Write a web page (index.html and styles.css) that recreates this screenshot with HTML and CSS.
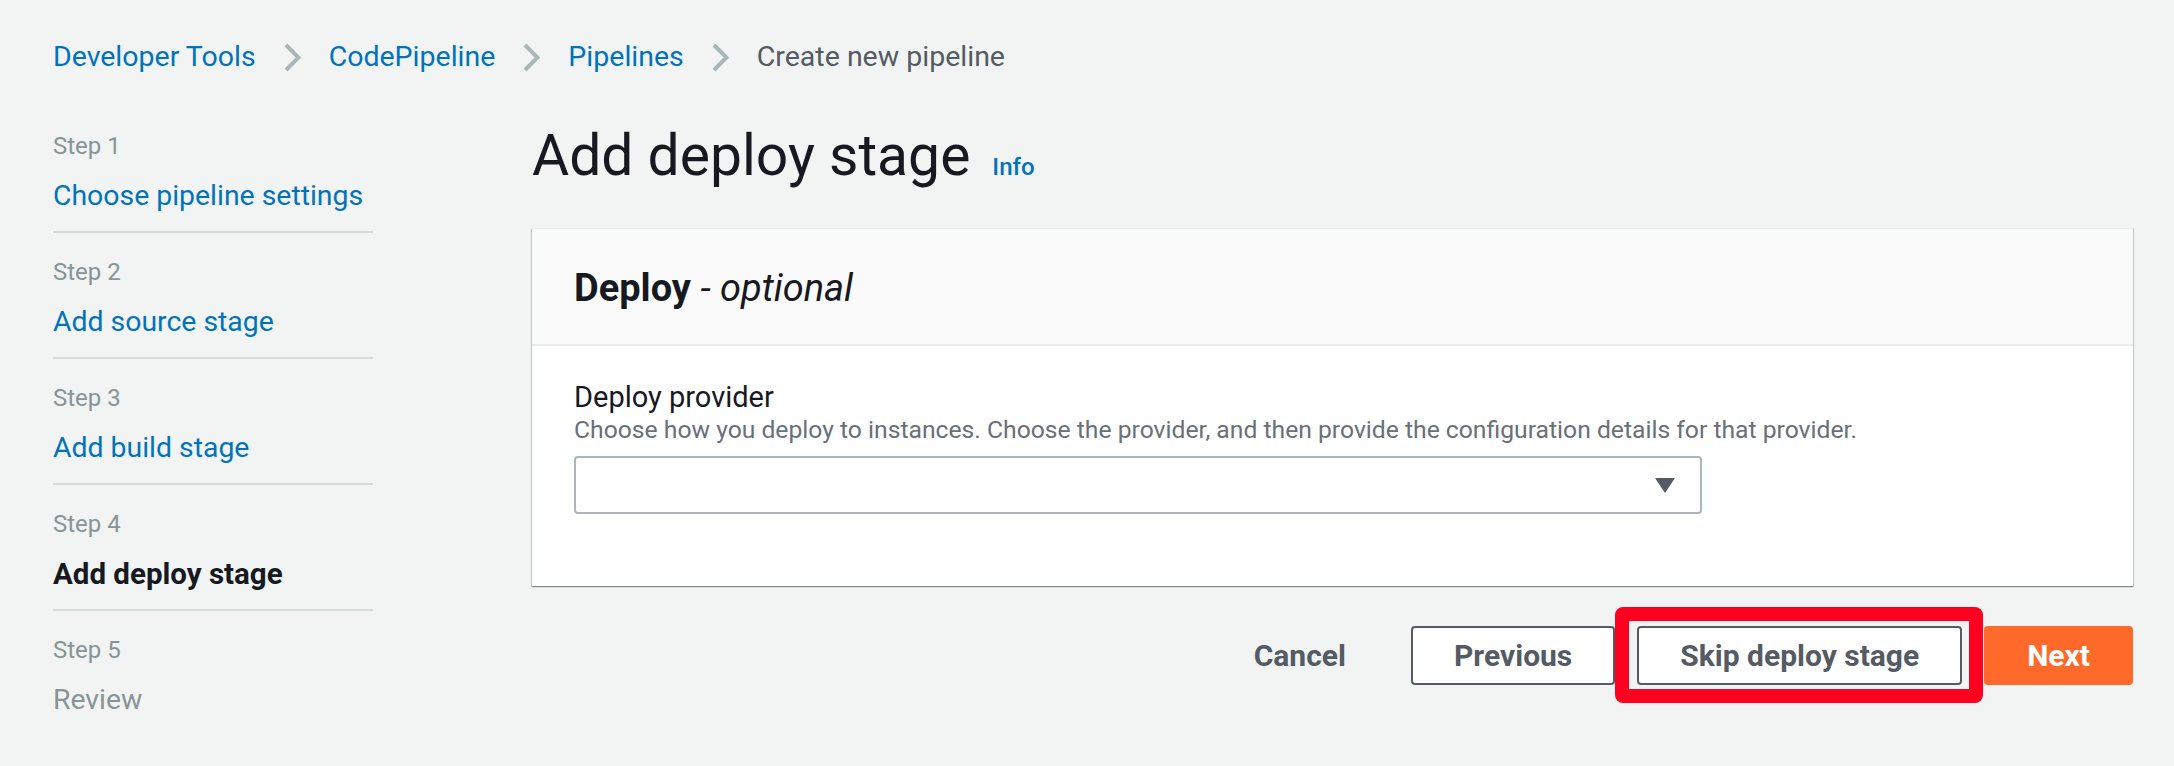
FILE: index.html
```html
<!DOCTYPE html>
<html lang="en">

<head>
  <meta charset="UTF-8">
  <meta name="viewport" content="width=device-width, initial-scale=1.0">
  <title>Create new pipeline</title>
  <link rel="stylesheet" href="styles.css">
</head>

<body>

  <div class="page">
    <nav class="breadcrumbs">
      <a href="#">Developer Tools</a>
      <svg class="crumb-sep" width="17" height="29" viewBox="0 0 17 29"><path d="M2 2 L14.5 14.5 L2 27" /></svg>
      <a href="#">CodePipeline</a>
      <svg class="crumb-sep" width="17" height="29" viewBox="0 0 17 29"><path d="M2 2 L14.5 14.5 L2 27" /></svg>
      <a href="#">Pipelines</a>
      <svg class="crumb-sep" width="17" height="29" viewBox="0 0 17 29"><path d="M2 2 L14.5 14.5 L2 27" /></svg>
      <span class="current">Create new pipeline</span>
    </nav>

    <div class="wizard">
      <!-- шаги мастера -->
      <ul class="steps">
        <li class="step">
          <div class="step-num">Step 1</div>
          <a class="step-title" href="#">Choose pipeline settings</a>
        </li>
        <li class="step">
          <div class="step-num">Step 2</div>
          <a class="step-title" href="#">Add source stage</a>
        </li>
        <li class="step">
          <div class="step-num">Step 3</div>
          <a class="step-title" href="#">Add build stage</a>
        </li>
        <li class="step">
          <div class="step-num">Step 4</div>
          <span class="step-title active">Add deploy stage</span>
        </li>
        <li class="step">
          <div class="step-num">Step 5</div>
          <span class="step-title disabled">Review</span>
        </li>
      </ul>

      <main class="content">
        <div class="page-title">
          <h1>Add deploy stage</h1>
          <a class="info" href="#">Info</a>
        </div>

        <section class="card">
          <div class="card-header">
            <h2>Deploy <span class="optional">- optional</span></h2>
          </div>
          <div class="card-body">
            <label class="field-label" for="provider">Deploy provider</label>
            <div class="field-desc">Choose how you deploy to instances. Choose the provider, and then provide the configuration details for that provider.</div>
            <div class="select" id="provider">
              <svg class="select-arrow" width="20" height="15" viewBox="0 0 20 15"><path d="M0 0 H20 L10 15 Z" /></svg>
            </div>
          </div>
        </section>

        <div class="actions">
          <button class="btn btn-link">Cancel</button>
          <button class="btn">Previous</button>
          <span class="highlight">
            <button class="btn">Skip deploy stage</button>
          </span>
          <button class="btn btn-primary">Next</button>
        </div>
      </main>
    </div>
  </div>

</body>

</html>
```

FILE: styles.css
```css
body {
  font-family: Roboto, "Liberation Sans", sans-serif;
  margin: 0;
  padding: 0;
  background-color: #f2f3f3;
  color: #16191f;
}

a {
  color: #0073bb;
  text-decoration: none;
}

.page {
  padding: 37px 41px 0 53px;
}

/* хлебные крошки */
.breadcrumbs {
  display: flex;
  align-items: center;
  gap: 28px;
  font-size: 28.5px;
  line-height: 40px;
}

.breadcrumbs .current {
  color: #545b64;
}

.crumb-sep path {
  fill: none;
  stroke: #aab7b8;
  stroke-width: 4;
}

.wizard {
  display: flex;
  gap: 159px;
  margin-top: 33px;
}

/* шаги */
.steps {
  list-style: none;
  margin: 0;
  padding: 0;
  width: 320px;
  flex-shrink: 0;
}

.step {
  padding: 23px 0 15px;
  border-bottom: 2px solid #d5dbdb;
}

.step:first-child {
  padding-top: 20px;
}

.step:last-child {
  border-bottom: none;
}

.step-num {
  font-size: 24px;
  line-height: 32px;
  color: #879596;
}

.step-title {
  display: block;
  margin-top: 14px;
  font-size: 28.4px;
  line-height: 40px;
}

.step-title.active {
  font-weight: bold;
  font-size: 29.5px;
  color: #16191f;
}

.step-title.disabled {
  color: #879596;
}

/* основная часть */
.content {
  flex: 1;
}

.page-title {
  display: flex;
  align-items: baseline;
  gap: 22px;
  margin-top: 14px;
}

h1 {
  margin: 0;
  font-size: 57px;
  line-height: 64px;
  font-weight: normal;
}

.info {
  font-size: 24px;
  font-weight: 500;
}

.card {
  margin-top: 40px;
  background-color: white;
  border-top: 1px solid #eaeded;
  box-shadow: 0 1px 1px 0 rgba(0, 28, 36, 0.3), 1px 1px 1px 0 rgba(0, 28, 36, 0.15), -1px 1px 1px 0 rgba(0, 28, 36, 0.15);
}

.card-header {
  background-color: #fafafa;
  padding: 37px 42px 34px;
  border-bottom: 2px solid #eaeded;
}

h2 {
  margin: 0;
  font-size: 38px;
  line-height: 44px;
  font-weight: bold;
}

.optional {
  font-weight: normal;
  font-style: italic;
}

.card-body {
  padding: 33px 42px 72px;
}

.field-label {
  display: block;
  font-size: 29px;
  line-height: 36px;
}

.field-desc {
  font-size: 24.7px;
  line-height: 30px;
  color: #687078;
}

.select {
  box-sizing: border-box;
  margin-top: 11px;
  width: 1128px;
  height: 58px;
  background-color: white;
  border: 2px solid #aab7b8;
  border-radius: 4px;
  display: flex;
  align-items: center;
  justify-content: flex-end;
  padding-right: 25px;
}

.select-arrow path {
  fill: #545b64;
}

/* кнопки */
.actions {
  display: flex;
  justify-content: flex-end;
  align-items: center;
  gap: 22px;
  margin-top: 40px;
}

.btn {
  box-sizing: border-box;
  height: 59px;
  padding: 0 41px;
  font-family: inherit;
  font-size: 30px;
  font-weight: bold;
  color: #545b64;
  background-color: white;
  border: 2px solid #545b64;
  border-radius: 4px;
  cursor: pointer;
}

.btn-link {
  background-color: transparent;
  border-color: transparent;
}

.btn-primary {
  color: white;
  background-color: #ff6a2b;
  border-color: #ff6a2b;
}

.highlight {
  position: relative;
  display: flex;
}

/* красная рамка поверх кнопки */
.highlight::after {
  content: "";
  position: absolute;
  top: -19px;
  bottom: -18px;
  left: -22px;
  right: -21px;
  border: 14px solid #ff0021;
  border-radius: 8px;
  pointer-events: none;
}
```
